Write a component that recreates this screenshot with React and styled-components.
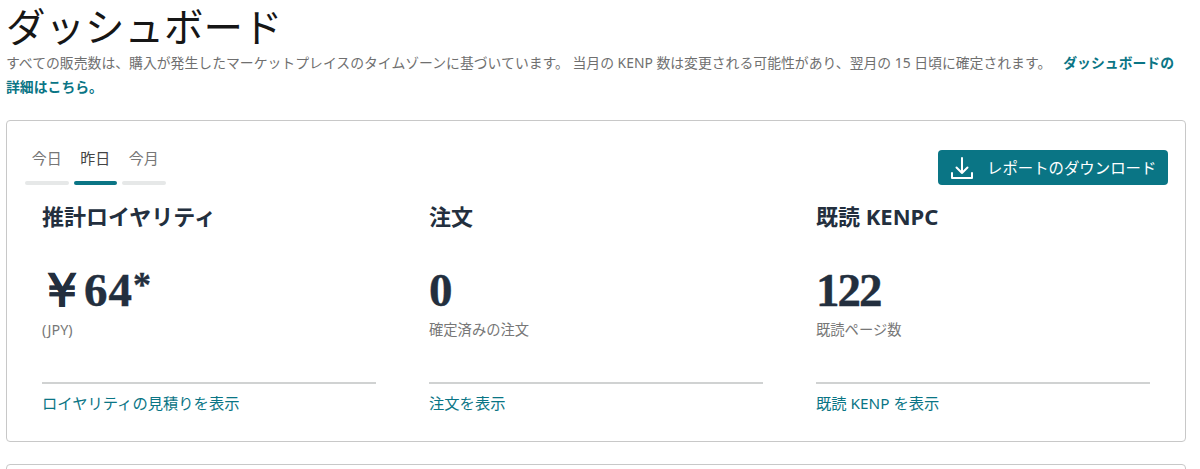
import styled, { createGlobalStyle } from "styled-components";

const GlobalStyle = createGlobalStyle`
  html, body {
    margin: 0;
    padding: 0;
    background: #fff;
    overflow: hidden;
    font-family: "Noto Sans", "Noto Sans CJK JP", sans-serif;
  }
`;

const Page = styled.div`
  width: 1200px;
  height: 469px;
  overflow: hidden;
  padding: 0 14px 0 6px;
  box-sizing: border-box;
`;

const Title = styled.h1`
  margin: 0;
  height: 51px;
  font-size: 39.5px;
  line-height: 55px;
  font-weight: 400;
  color: #161616;
`;

const Intro = styled.p`
  margin: 0 0 21px;
  width: 1170px;
  font-size: 13.85px;
  line-height: 24px;
  color: #6f6f6f;
`;

const TextLink = styled.a`
  margin-left: 12px;
  font-weight: 700;
  color: #0a7585;
`;

const Card = styled.section`
  box-sizing: border-box;
  height: 322px;
  border: 1px solid #c8c8c8;
  border-radius: 4px;
  padding: 27px 17px 0 18px;
`;

const TopRow = styled.div`
  display: flex;
  justify-content: space-between;
  align-items: flex-start;
`;

const Tabs = styled.div`
  display: flex;
  gap: 5px;
`;

const Tab = styled.div`
  width: 43.5px;
  text-align: center;
  font-size: 15px;
  line-height: 20px;
  white-space: nowrap;
  color: ${(p) => (p.$active ? "#444" : "#777")};

  &::after {
    content: "";
    display: block;
    height: 4px;
    margin-top: 13px;
    border-radius: 2px;
    background: ${(p) => (p.$active ? "#0a7585" : "#e6e8e8")};
  }
`;

const DownloadButton = styled.button`
  display: flex;
  align-items: center;
  gap: 13px;
  width: 230px;
  height: 35px;
  margin-top: 2px;
  padding: 0 0 0 12px;
  border: 0;
  border-radius: 4px;
  background: #0a7585;
  color: #fff;
  font-family: inherit;
  font-size: 15.4px;
  white-space: nowrap;
`;

const Columns = styled.div`
  display: grid;
  grid-template-columns: repeat(3, 334px);
  column-gap: 53px;
  margin: 16px 0 0 17px;
`;

const Column = styled.div`
  display: flex;
  flex-direction: column;
`;

const Heading = styled.h2`
  margin: 0;
  font-size: 22px;
  line-height: 30px;
  font-weight: 700;
  color: #232f3e;
`;

const Amount = styled.div`
  margin-top: 31px;
  font-family: "Liberation Serif", serif;
  font-size: 47px;
  line-height: 56px;
  font-weight: 700;
  letter-spacing: -2px;
  -webkit-text-stroke: 0.4px #232f3e;
  color: #232f3e;
`;

const Currency = styled.span`
  margin-left: -4px;
  letter-spacing: -1px;
`;

const Price = styled.span`
  letter-spacing: 1px;
`;

const Mark = styled.span`
  font-size: 36px;
  vertical-align: 9px;
  line-height: 0;
`;

const Note = styled.div`
  margin-top: 2px;
  height: 62px;
  font-size: 14.3px;
  line-height: 20px;
  color: #777;
`;

const ColumnLink = styled.a`
  display: block;
  border-top: 2px solid #d0d2d2;
  padding-top: 9px;
  font-size: 15.3px;
  line-height: 20px;
  color: #0a7585;
`;

const NextCard = styled.section`
  box-sizing: border-box;
  height: 40px;
  margin-top: 22px;
  border: 1px solid #c8c8c8;
  border-radius: 4px;
`;

const stats = [
  {
    title: "推計ロイヤリティ",
    value: (
      <>
        <Currency>￥</Currency>
        <Price>64</Price>
        <Mark>*</Mark>
      </>
    ),
    note: "(JPY)",
    link: "ロイヤリティの見積りを表示",
  },
  { title: "注文", value: "0", note: "確定済みの注文", link: "注文を表示" },
  { title: "既読 KENPC", value: "122", note: "既読ページ数", link: "既読 KENP を表示" },
];

function DownloadIcon() {
  return (
    <svg
      width="24"
      height="24"
      viewBox="0 0 24 24"
      fill="none"
      stroke="#fff"
      strokeWidth="2"
      strokeLinecap="round"
      strokeLinejoin="round"
    >
      <path d="M12 2v15M6.5 11.5L12 17l5.5-5.5M2 17v5h20v-5" />
    </svg>
  );
}

export default function App() {
  return (
    <>
      <GlobalStyle />
      <Page>
        <Title>ダッシュボード</Title>
        <Intro>
          すべての販売数は、購入が発生したマーケットプレイスのタイムゾーンに基づいています。 当月の KENP 数は変更される可能性があり、翌月の 15 日頃に確定されます。
          <TextLink>ダッシュボードの詳細はこちら。</TextLink>
        </Intro>
        <Card>
          <TopRow>
            <Tabs>
              <Tab>今日</Tab>
              <Tab $active>昨日</Tab>
              <Tab>今月</Tab>
            </Tabs>
            <DownloadButton>
              <DownloadIcon />
              レポートのダウンロード
            </DownloadButton>
          </TopRow>
          <Columns>
            {stats.map((s) => (
              <Column key={s.title}>
                <Heading>{s.title}</Heading>
                <Amount>{s.value}</Amount>
                <Note>{s.note}</Note>
                <ColumnLink>{s.link}</ColumnLink>
              </Column>
            ))}
          </Columns>
        </Card>
        <NextCard />
      </Page>
    </>
  );
}
